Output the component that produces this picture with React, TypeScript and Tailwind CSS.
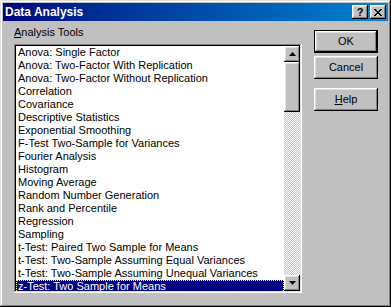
import React from 'react';

const tools = [
  'Anova: Single Factor',
  'Anova: Two-Factor With Replication',
  'Anova: Two-Factor Without Replication',
  'Correlation',
  'Covariance',
  'Descriptive Statistics',
  'Exponential Smoothing',
  'F-Test Two-Sample for Variances',
  'Fourier Analysis',
  'Histogram',
  'Moving Average',
  'Random Number Generation',
  'Rank and Percentile',
  'Regression',
  'Sampling',
  't-Test: Paired Two Sample for Means',
  't-Test: Two-Sample Assuming Equal Variances',
  't-Test: Two-Sample Assuming Unequal Variances',
  'z-Test: Two Sample for Means',
];

const raised =
  'bg-[#c0c0c0] shadow-[inset_-1px_-1px_#000,inset_1px_1px_#fff,inset_-2px_-2px_#808080,inset_2px_2px_#dfdfdf]';

function Arrow({ up }: { up?: boolean }) {
  return (
    <svg width="7" height="4" viewBox="0 0 7 4">
      <path d={up ? 'M3.5 0 L7 4 L0 4 Z' : 'M0 0 L7 0 L3.5 4 Z'} fill="#000" />
    </svg>
  );
}

function DialogButton({ children, isDefault }: { children: React.ReactNode; isDefault?: boolean }) {
  return (
    <div
      className={
        isDefault
          ? 'w-[64px] h-[23px] bg-[#c0c0c0] flex items-center justify-center shadow-[inset_0_0_0_1px_#000,inset_-2px_-2px_#000,inset_2px_2px_#fff,inset_-3px_-3px_#808080,inset_3px_3px_#dfdfdf]'
          : `w-[64px] h-[23px] flex items-center justify-center ${raised}`
      }
    >
      {children}
    </div>
  );
}

export default function App() {
  return (
    <div
      className="w-[391px] h-[307px] bg-[#c0c0c0] p-[3px] flex flex-col text-[11px] text-black shadow-[inset_-1px_-1px_#000,inset_1px_1px_#dfdfdf,inset_-2px_-2px_#808080,inset_2px_2px_#fff]"
      style={{ fontFamily: '"Liberation Sans", Arial, sans-serif' }}
    >
      {/* Title bar */}
      <div className="h-[18px] flex items-center bg-gradient-to-r from-[#000080] to-[#1084d0] pl-[2px] pr-[2px]">
        <span className="text-white font-bold text-[12px] leading-none">Data Analysis</span>
        <div className="ml-auto flex gap-[2px]">
          <div className={`w-[16px] h-[14px] flex items-center justify-center ${raised}`}>
            <span className="font-bold text-[11px] leading-none">?</span>
          </div>
          <div className={`w-[16px] h-[14px] flex items-center justify-center ${raised}`}>
            <svg width="8" height="7" viewBox="0 0 8 7">
              <path d="M0 0h2v1h1v1h2V1h1V0h2v1H7v1H6v1H5v1h1v1h1v1h1v1H6V6H5V5H3v1H2v1H0V6h1V5h1V4h1V3H2V2H1V1H0z" fill="#000" />
            </svg>
          </div>
        </div>
      </div>

      {/* Body */}
      <div className="flex flex-1">
        <div className="pl-[11px] pt-[5px] flex flex-col">
          <div className="h-[13px] leading-[13px]">
            <span className="underline">A</span>nalysis Tools
          </div>
          <div className="mt-[5px] w-[288px] h-[249px] bg-white p-[2px] flex shadow-[inset_-1px_-1px_#fff,inset_1px_1px_#808080,inset_-2px_-2px_#dfdfdf,inset_2px_2px_#000]">
            <div className="flex-1 flex flex-col overflow-hidden">
              {tools.map((t, i) => {
                const selected = i === tools.length - 1;
                return (
                  <div
                    key={t}
                    className={
                      selected
                        ? 'h-[13px] leading-[13px] pl-[2px] whitespace-nowrap bg-[#000080] text-white outline-1 outline-dotted outline-[#ffff80] -outline-offset-1'
                        : 'h-[13px] leading-[13px] pl-[2px] whitespace-nowrap'
                    }
                  >
                    {t}
                  </div>
                );
              })}
            </div>
            {/* Scrollbar */}
            <div className="w-[16px] flex flex-col">
              <div className={`h-[16px] flex items-center justify-center ${raised}`}>
                <Arrow up />
              </div>
              <div className={`h-[50px] ${raised}`} />
              <div className="flex-1 bg-[image:repeating-conic-gradient(#c0c0c0_0%_25%,#ffffff_0%_50%)] bg-[length:2px_2px]" />
              <div className={`h-[16px] flex items-center justify-center ${raised}`}>
                <Arrow />
              </div>
            </div>
          </div>
        </div>

        <div className="ml-[12px] pt-[9px] flex flex-col">
          <DialogButton isDefault>OK</DialogButton>
          <div className="mt-[3px]">
            <DialogButton>Cancel</DialogButton>
          </div>
          <div className="mt-[9px]">
            <DialogButton>
              <span>
                <span className="underline">H</span>elp
              </span>
            </DialogButton>
          </div>
        </div>
      </div>
    </div>
  );
}
